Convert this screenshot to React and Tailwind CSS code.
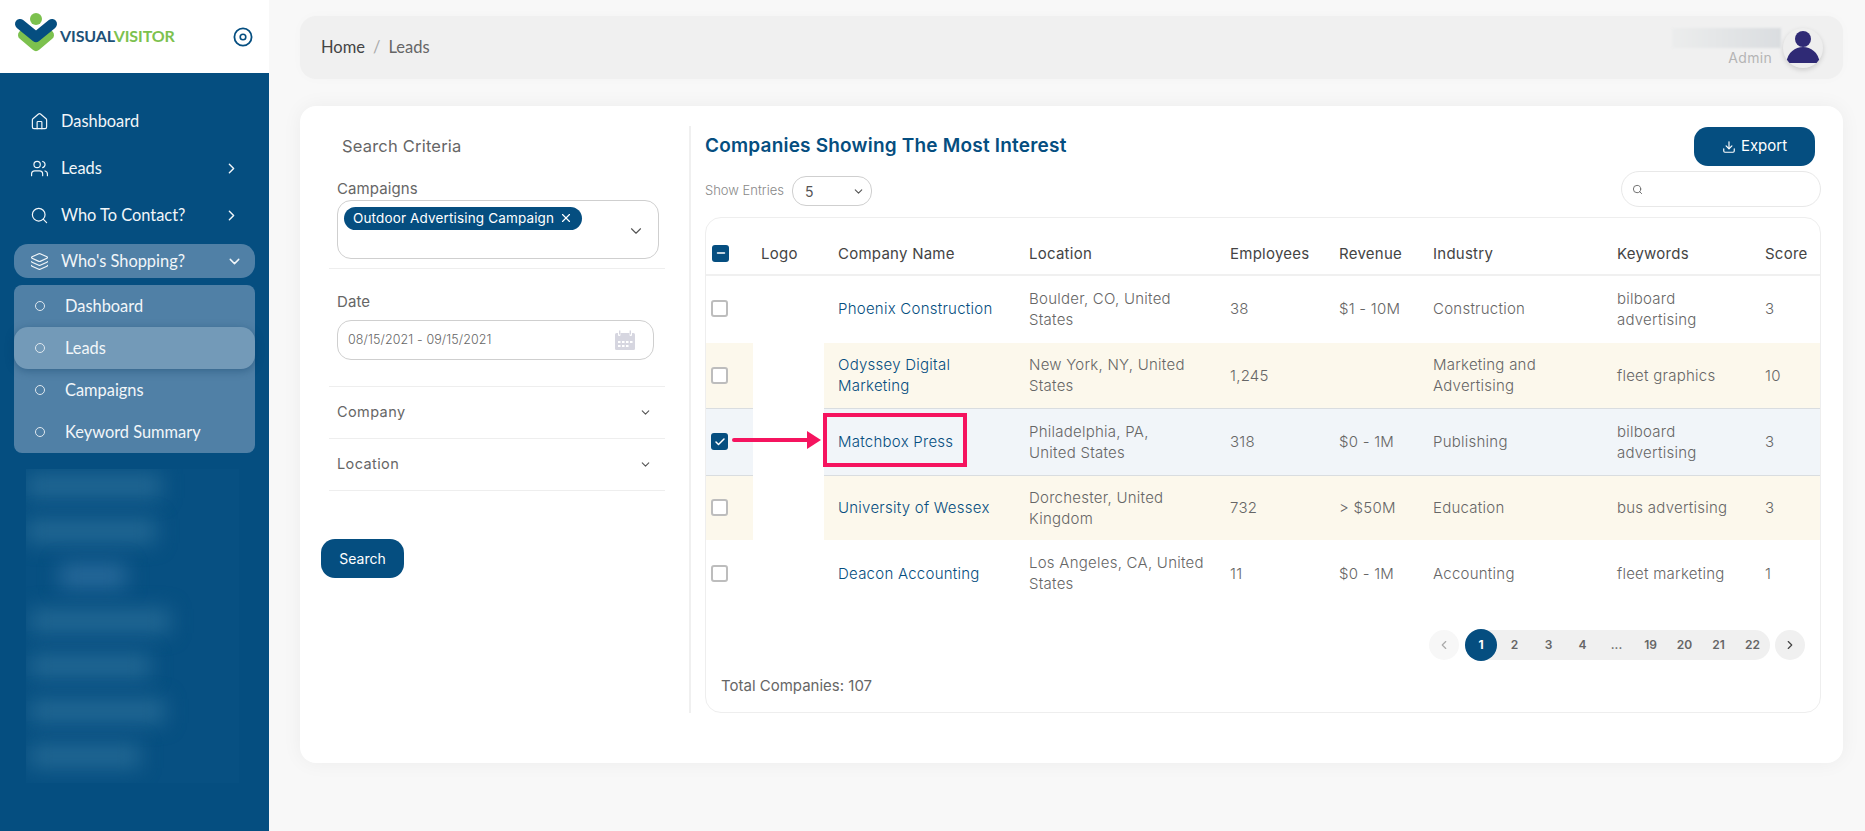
import React from 'react';
import { House, Users, Search, Layers, ChevronRight, ChevronDown, ChevronLeft, Download, X, Check, Minus } from 'lucide-react';

const rows = [
  { company: ['Phoenix Construction'], location: ['Boulder, CO, United', 'States'], employees: '38', revenue: '$1 - 10M', industry: ['Construction'], keywords: ['bilboard', 'advertising'], score: '3', h: 'h-[68px]', bg: '', line: 'pb-[2px]' },
  { company: ['Odyssey Digital', 'Marketing'], location: ['New York, NY, United', 'States'], employees: '1,245', revenue: '', industry: ['Marketing and', 'Advertising'], keywords: ['fleet graphics'], score: '10', h: 'h-[65px]', bg: 'bg-[#fcf8ec]', line: 'border-b border-[#d9dde0]' },
  { company: ['Matchbox Press'], location: ['Philadelphia, PA,', 'United States'], employees: '318', revenue: '$0 - 1M', industry: ['Publishing'], keywords: ['bilboard', 'advertising'], score: '3', h: 'h-[67px]', bg: 'bg-[#f1f5f9]', line: 'border-b border-[#d9dde0]', checked: true },
  { company: ['University of Wessex'], location: ['Dorchester, United', 'Kingdom'], employees: '732', revenue: '> $50M', industry: ['Education'], keywords: ['bus advertising'], score: '3', h: 'h-[65px]', bg: 'bg-[#fcf8ec]', line: '' },
  { company: ['Deacon Accounting'], location: ['Los Angeles, CA, United', 'States'], employees: '11', revenue: '$0 - 1M', industry: ['Accounting'], keywords: ['fleet marketing'], score: '1', h: 'h-[66px]', bg: '', line: '' },
];

const pages = ['2', '3', '4', '...', '19', '20', '21', '22'];

function Logo() {
  return (
    <div className="flex items-center">
      <svg width="60" height="73" viewBox="0 0 60 73" className="shrink-0">
        <path d="M23 35 L36 46 L49 35" fill="none" stroke="#7cc14e" strokeWidth="10" strokeLinecap="round" strokeLinejoin="round" />
        <path d="M20 24 L36 37 L52 24" fill="none" stroke="#054e80" strokeWidth="10" strokeLinecap="round" strokeLinejoin="round" />
        <circle cx="36" cy="19" r="6" fill="#7cc14e" />
      </svg>
      <span className="mb-[2px] text-[16px] font-bold tracking-[-0.1px] font-['Lato',sans-serif] text-[#1d5178]">
        VISUAL<span className="text-[#7cc14e]">VISITOR</span>
      </span>
    </div>
  );
}

function NavItem({ icon: Icon, label, arrow, open }) {
  return (
    <div className={`flex items-center pl-[16px] text-[#f2f6f9] ${open ? 'h-[34px] rounded-[14px] bg-[#5080a6] pr-[12px]' : 'h-[47px] pr-[15px]'}`}>
      <Icon size={19} strokeWidth={1.5} className="shrink-0" />
      <span className="ml-[12px] text-[16.4px] font-['Lato',sans-serif]">{label}</span>
      {arrow && <ChevronRight size={17} strokeWidth={2} className="ml-auto" />}
      {open && <ChevronDown size={17} strokeWidth={2} className="ml-auto" />}
    </div>
  );
}

function SubItem({ label, active }) {
  return (
    <div className={`flex h-[42px] items-center pl-[21px] text-[#f2f6f9] ${active ? 'rounded-[14px] bg-[#739ab8] shadow-[0_2px_8px_rgba(0,50,90,0.35)]' : ''}`}>
      <span className="h-[10px] w-[10px] rounded-full border border-[#dfe8ef]" />
      <span className="ml-[20px] text-[16.4px] font-['Lato',sans-serif]">{label}</span>
    </div>
  );
}

function Sidebar() {
  return (
    <aside className="flex w-[269px] shrink-0 flex-col bg-[#054e80]">
      <div className="flex h-[73px] items-center justify-between bg-white pr-[16px]">
        <Logo />
        <svg width="20" height="20" viewBox="0 0 20 20">
          <circle cx="10" cy="10" r="8.6" fill="none" stroke="#054e80" strokeWidth="1.8" />
          <circle cx="10" cy="10" r="2.8" fill="none" stroke="#054e80" strokeWidth="1.6" />
        </svg>
      </div>
      <nav className="mt-[25px] px-[14px]">
        <NavItem icon={House} label="Dashboard" />
        <NavItem icon={Users} label="Leads" arrow />
        <NavItem icon={Search} label="Who To Contact?" arrow />
        <div className="mt-[5px]">
          <NavItem icon={Layers} label="Who's Shopping?" open />
        </div>
        <div className="mt-[7px] rounded-[8px] bg-[#5080a6]">
          <SubItem label="Dashboard" />
          <SubItem label="Leads" active />
          <SubItem label="Campaigns" />
          <SubItem label="Keyword Summary" />
        </div>
      </nav>
      {/* blurred part of the menu */}
      <div className="mx-[26px] mt-[16px] flex h-[314px] w-[213px] flex-col gap-[21px] overflow-hidden bg-[#075082] pt-[5px]">
        <div className="h-[24px] w-[135px] bg-[#226793] blur-[10px]" />
        <div className="h-[24px] w-[130px] bg-[#226793] blur-[10px]" />
        <div className="ml-[34px] h-[24px] w-[66px] bg-[#28699a] blur-[10px]" />
        <div className="ml-[4px] h-[24px] w-[140px] bg-[#226793] blur-[10px]" />
        <div className="ml-[4px] h-[24px] w-[120px] bg-[#226793] blur-[10px]" />
        <div className="ml-[4px] h-[24px] w-[135px] bg-[#226793] blur-[10px]" />
        <div className="ml-[4px] h-[24px] w-[110px] bg-[#226793] blur-[10px]" />
      </div>
    </aside>
  );
}

function Topbar() {
  return (
    <header className="flex h-[63px] items-center rounded-[16px] bg-[#f0f0f0] pl-[21px] pr-[20px] shadow-[0_0_12px_rgba(0,0,0,0.02)]">
      <div className="flex items-center text-[16.5px] text-[#444] font-['Lato',sans-serif]">
        <span>Home</span>
        <span className="mx-[8px] text-[#aaa]">/</span>
        <span className="text-[#666]">Leads</span>
      </div>
      <div className="ml-auto flex items-center">
        <div className="mr-[2px] flex flex-col items-end">
          <div className="h-[20px] w-[109px] bg-gradient-to-r from-[#eceded] to-[#dadde0] blur-[1px]" />
          <span className="mr-[9px] mt-[1px] text-[14px] leading-[18px] tracking-[0.3px] text-[#b5b5b5]">Admin</span>
        </div>
        <div className="flex h-[40px] w-[40px] items-center justify-center overflow-hidden rounded-full bg-[#eeeeee] shadow-[0_2px_5px_rgba(0,0,0,0.15)]">
          <svg width="40" height="40" viewBox="0 0 40 40">
            <circle cx="20" cy="11" r="8" fill="#2f2a75" />
            <path d="M3 35 C5 24 12 19 20 19 C28 19 35 24 37 35 Z" fill="#2f2a75" />
          </svg>
        </div>
      </div>
    </header>
  );
}

function FilterRow({ label }) {
  return (
    <div className="flex h-[52px] items-center justify-between border-b border-[#eeeeee] pb-[1px] pl-[8px] pr-[13px]">
      <span className="text-[14.5px] tracking-[0.4px] text-[#666]">{label}</span>
      <ChevronDown size={13} strokeWidth={2} className="text-[#555]" />
    </div>
  );
}

function SearchCriteria() {
  return (
    <div className="w-[391px] shrink-0 border-r-2 border-[#f0f0f0] pl-[29px] pr-[24px]">
      <h2 className="pl-[13px] pt-[9px] text-[16.5px] leading-[22px] tracking-[0.2px] text-[#666]">Search Criteria</h2>
      <div className="border-b border-[#eeeeee] pb-[9px] pl-[8px] pr-[6px] pt-[22px]">
        <label className="block text-[15px] leading-[20px] tracking-[0.1px] text-[#666]">Campaigns</label>
        <div className="relative mt-[1px] h-[59px] rounded-[14px] border border-[#cfcfcf] pl-[6px] pt-[4px]">
          <span className="inline-flex h-[23px] w-[238px] items-center rounded-full bg-[#054e80] pl-[9px] text-[13.5px] tracking-[0.15px] text-white">
            Outdoor Advertising Campaign
            <X size={14} strokeWidth={2} className="ml-[5px]" />
          </span>
          <ChevronDown size={18} strokeWidth={1.5} className="absolute right-[13px] top-[21px] text-[#555]" />
        </div>
      </div>
      <div className="border-b border-[#eeeeee] pb-[26px] pl-[8px] pr-[11px] pt-[23px]">
        <label className="block text-[15px] leading-[20px] tracking-[0.1px] text-[#666]">Date</label>
        <div className="mt-[8px] flex h-[40px] items-center justify-between rounded-[14px] border border-[#cfcfcf] pl-[10px] pr-[18px]">
          <span className="text-[12.5px] font-light tracking-[0.1px] text-[#666]">08/15/2021 - 09/15/2021</span>
          <svg width="20" height="20" viewBox="0 0 20 20" fill="#d6d6e0">
            <rect x="0" y="3" width="20" height="17" rx="1.5" />
            <rect x="3" y="0" width="2.5" height="6" rx="1" fill="#fff" />
            <rect x="14.5" y="0" width="2.5" height="6" rx="1" fill="#fff" />
            <rect x="4" y="0.5" width="1.4" height="4" fill="#d6d6e0" />
            <rect x="14.6" y="0.5" width="1.4" height="4" fill="#d6d6e0" />
            <rect x="3" y="11" width="2.5" height="2" fill="#fff" />
            <rect x="7" y="11" width="2.5" height="2" fill="#fff" />
            <rect x="11" y="11" width="2.5" height="2" fill="#fff" />
            <rect x="15" y="11" width="2.5" height="2" fill="#fff" />
            <rect x="3" y="15" width="2.5" height="2" fill="#fff" />
            <rect x="7" y="15" width="2.5" height="2" fill="#fff" />
            <rect x="11" y="15" width="2.5" height="2" fill="#fff" />
          </svg>
        </div>
      </div>
      <FilterRow label="Company" />
      <FilterRow label="Location" />
      <button className="-ml-[8px] mt-[48px] h-[39px] w-[83px] rounded-[14px] bg-[#054e80] text-[14px] text-white">Search</button>
    </div>
  );
}

function Checkbox({ checked, minus }) {
  if (checked || minus) {
    return (
      <span className="flex h-[17px] w-[17px] items-center justify-center rounded-[3px] bg-[#054e80] text-white">
        {checked ? <Check size={12} strokeWidth={3} /> : <Minus size={12} strokeWidth={3} />}
      </span>
    );
  }
  return <span className="block h-[17px] w-[17px] rounded-[3px] border-2 border-[#bdbdbd] bg-white" />;
}

function Lines({ items }) {
  return items.map((t) => <div key={t}>{t}</div>);
}

function CompanyTable() {
  return (
    <div className="relative mt-[10px] h-[496px] rounded-[16px] border border-[#eeeeee]">
      <table className="w-full table-fixed border-collapse text-left text-[15px] leading-[21px] tracking-[0.25px]">
        <colgroup>
          <col className="w-[47px]" />
          <col className="w-[71px]" />
          <col className="w-[191px]" />
          <col className="w-[201px]" />
          <col className="w-[109px]" />
          <col className="w-[94px]" />
          <col className="w-[184px]" />
          <col className="w-[148px]" />
          <col />
        </colgroup>
        <thead>
          <tr className="h-[57px] border-b-2 border-[#f0f0f0] text-[#444]">
            <th className="pl-[6px] pt-[14px] font-normal"><Checkbox minus /></th>
            <th className="pl-[8px] pt-[14px] font-normal">Logo</th>
            <th className="pl-[14px] pt-[14px] font-normal">Company Name</th>
            <th className="pl-[14px] pt-[14px] font-normal">Location</th>
            <th className="pl-[14px] pt-[14px] font-normal">Employees</th>
            <th className="pl-[14px] pt-[14px] font-normal">Revenue</th>
            <th className="pl-[14px] pt-[14px] font-normal">Industry</th>
            <th className="pl-[14px] pt-[14px] font-normal">Keywords</th>
            <th className="pl-[14px] pt-[14px] font-normal">Score</th>
          </tr>
        </thead>
        <tbody className="font-light text-[#666]">
          {rows.map((r) => (
            <tr key={r.company[0]} className={r.h}>
              <td className={`pl-[5px] ${r.bg} ${r.line}`}><Checkbox checked={r.checked} /></td>
              <td className="bg-white" />
              <td className={`pl-[14px] text-[#054e80] ${r.bg} ${r.line}`}><Lines items={r.company} /></td>
              <td className={`pl-[14px] ${r.bg} ${r.line}`}><Lines items={r.location} /></td>
              <td className={`pl-[14px] ${r.bg} ${r.line}`}>{r.employees}</td>
              <td className={`pl-[14px] ${r.bg} ${r.line}`}>{r.revenue}</td>
              <td className={`pl-[14px] ${r.bg} ${r.line}`}><Lines items={r.industry} /></td>
              <td className={`pl-[14px] ${r.bg} ${r.line}`}><Lines items={r.keywords} /></td>
              <td className={`pl-[14px] ${r.bg} ${r.line}`}>{r.score}</td>
            </tr>
          ))}
        </tbody>
      </table>

      <div className="mt-[24px] flex items-center justify-end pr-[15px]">
        <span className="flex h-[30px] w-[30px] items-center justify-center rounded-full bg-[#f7f7f7] text-[#aaa]">
          <ChevronLeft size={14} />
        </span>
        <div className="ml-[6px] flex h-[30px] w-[305px] items-center rounded-full bg-[#f0f0f0] text-[12px] font-semibold text-[#666]">
          <span className="flex h-[32px] w-[32px] items-center justify-center rounded-full bg-[#054e80] font-bold text-white">1</span>
          {pages.map((p) => (
            <span key={p} className="w-[34px] pl-[1px] text-center">{p}</span>
          ))}
        </div>
        <span className="ml-[5px] flex h-[30px] w-[30px] items-center justify-center rounded-full bg-[#f0f0f0] text-[#444]">
          <ChevronRight size={14} />
        </span>
      </div>
      <div className="ml-[15px] mt-[16px] text-[15px] leading-[20px] text-[#666]">Total Companies: 107</div>

      {/* annotation drawn over the table */}
      <div className="absolute left-[117px] top-[195px] h-[54px] w-[144px] border-[4px] border-[#f5145f]" />
      <svg className="absolute left-[26px] top-[212px]" width="90" height="20" viewBox="0 0 90 20">
        <path d="M2 10 H78" stroke="#f5145f" strokeWidth="4" strokeLinecap="round" />
        <path d="M75 1 L89 10 L75 19 Z" fill="#f5145f" />
      </svg>
    </div>
  );
}

function Companies() {
  return (
    <div className="min-w-0 flex-1 pl-[14px] pr-[22px] pt-[1px]">
      <div className="flex items-center justify-between pr-[6px]">
        <h2 className="mb-[1px] text-[19px] font-semibold tracking-[0.2px] text-[#054e80]">Companies Showing The Most Interest</h2>
        <button className="flex h-[39px] w-[121px] items-center justify-center gap-[5px] rounded-[14px] bg-[#054e80] text-[15px] text-white">
          <Download size={14} strokeWidth={2} />
          Export
        </button>
      </div>
      <div className="mt-[5px] flex items-start justify-between">
        <div className="mt-[5px] flex items-center">
          <span className="text-[13px] font-light text-[#888]">Show Entries</span>
          <div className="ml-[8px] flex h-[30px] w-[80px] items-center justify-between rounded-[14px] border border-[#cfcfcf] pl-[12px] pr-[6px] text-[14px] text-[#555]">
            5
            <ChevronDown size={13} strokeWidth={2} />
          </div>
        </div>
        <div className="flex h-[36px] w-[200px] items-center rounded-full border border-[#e8e8e8] pl-[10px] text-[#666]">
          <Search size={11} strokeWidth={2} />
        </div>
      </div>
      <CompanyTable />
    </div>
  );
}

export default function App() {
  return (
    <div className="flex h-screen overflow-hidden bg-[#f8f8f8] font-['Inter',sans-serif]">
      <Sidebar />
      <main className="min-w-0 flex-1 pl-[31px] pr-[22px] pt-[16px]">
        <Topbar />
        <section className="mt-[27px] flex h-[657px] rounded-[16px] bg-white pb-[50px] pt-[20px] shadow-[0_0_20px_rgba(0,0,0,0.05)]">
          <SearchCriteria />
          <Companies />
        </section>
      </main>
    </div>
  );
}
